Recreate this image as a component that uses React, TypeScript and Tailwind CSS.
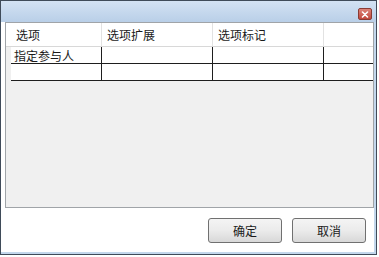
import React from "react";

const COLS = [
  { label: "选项", w: "w-[91px]" },
  { label: "选项扩展", w: "w-[111px]" },
  { label: "选项标记", w: "w-[111px]" },
  { label: "", w: "w-[49px]" },
];

const ROWS = [["指定参与人", "", "", ""], ["", "", "", ""]];

function CloseButton() {
  return (
    <div className="w-[14px] h-[12px] rounded-[2px] border border-[#8a3b33] bg-gradient-to-b from-[#dc8379] to-[#c0463b] flex items-center justify-center">
      <svg width="8" height="7" viewBox="0 0 8 7">
        <path d="M1.5 1 L6.5 6 M6.5 1 L1.5 6" stroke="#fff" strokeWidth="1.6" strokeLinecap="round" />
      </svg>
    </div>
  );
}

function DialogButton({ label }: { label: string }) {
  return (
    <div className="w-[74px] h-[25px] rounded-[3px] border border-[#707070] bg-gradient-to-b from-[#f4f4f4] via-[#ebebeb] to-[#d8d8d8] flex items-center justify-center text-[12px] text-[#1a1a1a]">
      {label}
    </div>
  );
}

export default function App() {
  return (
    <div
      className="w-[379px] h-[257px] bg-white"
      style={{ fontFamily: '"Noto Sans CJK SC", "Noto Sans", sans-serif' }}
    >
      <div className="w-[377px] h-[255px] border border-[#3f4b59] flex flex-col">
        {/* Title bar */}
        <div className="h-[21px] bg-gradient-to-b from-[#d3e2f3] to-[#b9cfe8] flex items-start justify-end pt-[7px] pr-[4px]">
          <CloseButton />
        </div>

        {/* Body */}
        <div className="flex-1 flex flex-col bg-white pl-[4px] border-r-2 border-b-2 border-[#c3d7ec]">
          {/* Grid */}
          <div className="h-[186px] border border-[#a0a4a8] bg-[#f0f0f0] flex flex-col">
            <div className="flex h-[24px] bg-white border-b border-[#d8d8d8]">
              <div className="w-[5px]" />
              {COLS.map((c, i) => (
                <div
                  key={i}
                  className={`${c.w} ${i < COLS.length - 1 ? "border-r border-[#e2e2e2]" : ""} flex items-center pl-[5px] text-[12px] text-[#1a1a1a]`}
                >
                  {c.label}
                </div>
              ))}
            </div>
            {ROWS.map((row, r) => (
              <div key={r} className="flex h-[17px]">
                <div className="w-[5px]" />
                {row.map((cell, i) => (
                  <div
                    key={i}
                    className={`${COLS[i].w} bg-white border-b border-[#1e1e1e] ${i < row.length - 1 ? "border-r" : ""} flex items-center pl-[3px] pt-[1px] text-[12px] leading-none text-[#1a1a1a]`}
                  >
                    {cell}
                  </div>
                ))}
              </div>
            ))}
          </div>

          {/* Buttons */}
          <div className="flex-1 flex justify-end items-start gap-[10px] pt-[10px] pr-[8px]">
            <DialogButton label="确定" />
            <DialogButton label="取消" />
          </div>
        </div>
      </div>
    </div>
  );
}
